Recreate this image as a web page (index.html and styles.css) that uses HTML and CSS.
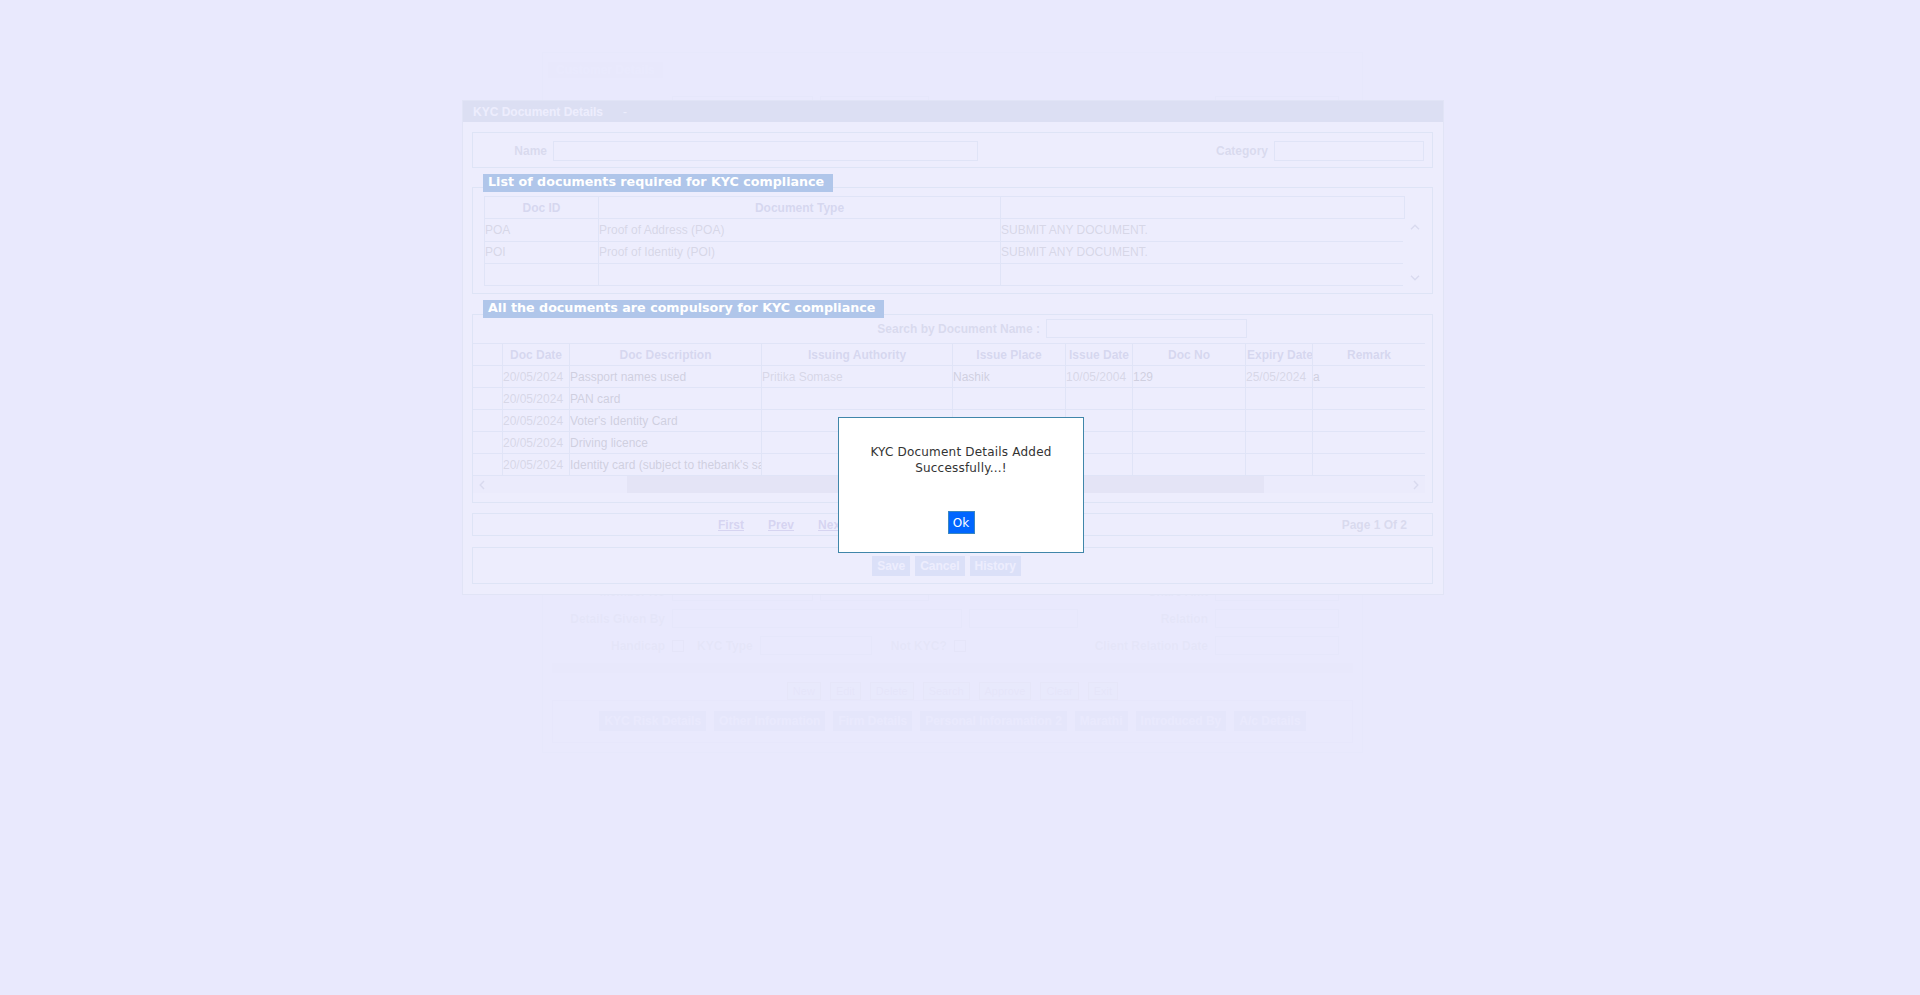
FILE: index.html
```html
<!DOCTYPE html>
<html lang="en">
<head>
<meta charset="utf-8">
<title>KYC Document Details</title>
<link rel="stylesheet" href="styles.css">
</head>
<body>
<div class="page">
  <div class="page-tabs"><span class="page-tab">Customer Details</span></div>
  <div class="fields">
    <div class="frow"><span class="fl">Customer No</span><span class="fi w141"></span><span class="fi w109"></span><span class="fl grow">Branch</span><span class="fi w124"></span></div>
    <div class="frow"><span class="fl">Title</span><span class="fi w141"></span><span class="fi w109"></span><span class="fl grow">Gender</span><span class="fi w124"></span></div>
    <div class="frow"><span class="fl">First Name</span><span class="fi w141"></span><span class="fi w109"></span><span class="fl grow">Middle Name</span><span class="fi w124"></span></div>
    <div class="frow"><span class="fl">Last Name</span><span class="fi w141"></span><span class="fi w109"></span><span class="fl grow">Birth Date</span><span class="fi w124"></span></div>
    <div class="frow"><span class="fl">Address 1</span><span class="fi w290"></span><span class="fl grow">City</span><span class="fi w124"></span></div>
    <div class="frow"><span class="fl">Address 2</span><span class="fi w290"></span><span class="fl grow">State</span><span class="fi w124"></span></div>
    <div class="frow"><span class="fl">Address 3</span><span class="fi w290"></span><span class="fl grow">Pin Code</span><span class="fi w124"></span></div>
    <div class="frow"><span class="fl">Phone</span><span class="fi w141"></span><span class="fi w109"></span><span class="fl grow">Mobile No</span><span class="fi w124"></span></div>
    <div class="frow"><span class="fl">Email</span><span class="fi w290"></span><span class="fl grow">PAN No</span><span class="fi w124"></span></div>
    <div class="frow"><span class="fl">Occupation</span><span class="fi w141"></span><span class="fi w109"></span><span class="fl grow">Income</span><span class="fi w124"></span></div>
    <div class="frow"><span class="fl">Category</span><span class="fi w141"></span><span class="fi w109"></span><span class="fl grow">Caste</span><span class="fi w124"></span></div>
    <div class="frow"><span class="fl">Religion</span><span class="fi w141"></span><span class="fi w109"></span><span class="fl grow">Education</span><span class="fi w124"></span></div>
    <div class="frow"><span class="fl">Nominee</span><span class="fi w290"></span><span class="fl grow">Relation</span><span class="fi w124"></span></div>
    <div class="frow"><span class="fl">Guardian</span><span class="fi w290"></span><span class="fl grow">Relation</span><span class="fi w124"></span></div>
    <div class="frow"><span class="fl">Father Name</span><span class="fi w290"></span><span class="fl grow">Mother Name</span><span class="fi w124"></span></div>
    <div class="frow"><span class="fl">Spouse Name</span><span class="fi w290"></span><span class="fl grow">Marital Status</span><span class="fi w124"></span></div>
    <div class="frow"><span class="fl">Aadhar No</span><span class="fi w141"></span><span class="fi w109"></span><span class="fl grow">Voter ID</span><span class="fi w124"></span></div>
    <div class="frow"><span class="fl">Passport No</span><span class="fi w141"></span><span class="fi w109"></span><span class="fl grow">Valid Till</span><span class="fi w124"></span></div>
    <div class="frow"><span class="fl">Member No</span><span class="fi w141"></span><span class="fi w109"></span><span class="fl grow">Share Amt</span><span class="fi w124"></span></div>
    <div class="frow"><span class="fl">Details Given By</span><span class="fi w290"></span><span class="fi w109"></span><span class="fl grow">Relation</span><span class="fi w124"></span></div>
    <div class="frow"><span class="fl">Handicap</span><span class="chk"></span><span class="fl auto">KYC Type</span><span class="fi w112"></span><span class="fl auto pad">Not KYC?</span><span class="chk"></span><span class="fl grow">Client Relation Date</span><span class="fi w124"></span></div>
  </div>
  <div class="band"></div>
  <div class="actions">
    <button class="act" type="button">New</button>
    <button class="act" type="button">Edit</button>
    <button class="act" type="button">Delete</button>
    <button class="act" type="button">Search</button>
    <button class="act" type="button">Approve</button>
    <button class="act" type="button">Clear</button>
    <button class="act" type="button">Exit</button>
  </div>
  <div class="tabs">
    <button class="tab" type="button">KYC Risk Details</button>
    <button class="tab" type="button">Other Information</button>
    <button class="tab" type="button">Firm Details</button>
    <button class="tab" type="button">Personal Inforamation 2</button>
    <button class="tab" type="button">Marathi</button>
    <button class="tab" type="button">Introduced By</button>
    <button class="tab" type="button">A/c Details</button>
  </div>
</div>

<div class="shade shade-page"></div>

<div class="dialog">
  <div class="dlg-title"><span>KYC Document Details</span><span class="dlg-min">-</span></div>
  <div class="dlg-body">
    <div class="box namebox">
      <label class="lbl name-lbl">Name</label><input class="inp name-inp" type="text">
      <label class="lbl cat-lbl">Category</label><input class="inp cat-inp" type="text">
    </div>

    <div class="legend">List of documents required for KYC compliance</div>
    <div class="box group doclist">
      <table class="grid g1">
        <colgroup><col class="c-id"><col class="c-type"><col></colgroup>
        <tr><th>Doc ID</th><th>Document Type</th><th></th></tr>
      </table>
      <div class="g1-row">
        <div class="g1-body">
          <table class="grid g1">
            <colgroup><col class="c-id"><col class="c-type"><col></colgroup>
            <tr><td class="dim">POA</td><td class="dim">Proof of Address (POA)</td><td class="dim">SUBMIT ANY DOCUMENT.</td></tr>
            <tr><td class="dim">POI</td><td class="dim">Proof of Identity (POI)</td><td class="dim">SUBMIT ANY DOCUMENT.</td></tr>
            <tr><td></td><td></td><td></td></tr>
          </table>
        </div>
        <div class="vscroll">
          <svg class="arr" width="10" height="6" viewBox="0 0 10 6"><path d="M1 5.2 L5 1.2 L9 5.2" fill="none" stroke="currentColor" stroke-width="1.4"/></svg>
          <svg class="arr" width="10" height="6" viewBox="0 0 10 6"><path d="M1 0.8 L5 4.8 L9 0.8" fill="none" stroke="currentColor" stroke-width="1.4"/></svg>
        </div>
      </div>
    </div>

    <div class="legend">All the documents are compulsory for KYC compliance</div>
    <div class="box group2 docs">
      <div class="search"><label class="lbl">Search by Document Name :</label><input class="inp search-inp" type="text"></div>
      <div class="g2-wrap">
        <table class="grid g2">
          <colgroup><col class="k0"><col class="k1"><col class="k2"><col class="k3"><col class="k4"><col class="k5"><col class="k6"><col class="k7"><col class="k8"></colgroup>
          <tr><th></th><th>Doc Date</th><th>Doc Description</th><th>Issuing Authority</th><th>Issue Place</th><th>Issue Date</th><th>Doc No</th><th>Expiry Date</th><th>Remark</th></tr>
          <tr><td></td><td class="dim">20/05/2024</td><td>Passport names used</td><td class="dim">Pritika Somase</td><td>Nashik</td><td class="dim">10/05/2004</td><td>129</td><td class="dim">25/05/2024</td><td>a</td></tr>
          <tr><td></td><td class="dim">20/05/2024</td><td>PAN card</td><td></td><td></td><td></td><td></td><td></td><td></td></tr>
          <tr><td></td><td class="dim">20/05/2024</td><td>Voter's Identity Card</td><td></td><td></td><td></td><td></td><td></td><td></td></tr>
          <tr><td></td><td class="dim">20/05/2024</td><td>Driving licence</td><td></td><td></td><td></td><td></td><td></td><td></td></tr>
          <tr><td></td><td class="dim">20/05/2024</td><td>Identity card (subject to thebank's satisfaction)</td><td></td><td></td><td></td><td></td><td></td><td></td></tr>
        </table>
        <div class="hscroll">
          <svg class="arr" width="6" height="10" viewBox="0 0 6 10"><path d="M5 1 L1.2 5 L5 9" fill="none" stroke="currentColor" stroke-width="1.4"/></svg>
          <div class="h-track"><div class="h-thumb"></div></div>
          <svg class="arr" width="6" height="10" viewBox="0 0 6 10"><path d="M1 1 L4.8 5 L1 9" fill="none" stroke="currentColor" stroke-width="1.4"/></svg>
        </div>
      </div>
    </div>

    <div class="box pager">
      <div class="links"><a href="#">First</a><a href="#">Prev</a><a href="#">Next</a><a href="#">Last</a></div>
      <span class="pageno">Page 1 Of 2</span>
    </div>

    <div class="box btnbox">
      <button class="btn" type="button">Save</button>
      <button class="btn" type="button">Cancel</button>
      <button class="btn" type="button">History</button>
    </div>
  </div>
</div>

<div class="shade"></div>

<div class="msgbox">
  <p class="msg">KYC Document Details Added<br>Successfully...!</p>
  <button class="ok" type="button">Ok</button>
</div>
</body>
</html>
```

FILE: styles.css
```css
html, body {
  margin: 0;
  padding: 0;
  background: #ffffff;
  font-family: "Liberation Sans", Arial, sans-serif;
  font-size: 12px;
}

/* ---------- background page ---------- */
.page {
  width: 801px;
  margin: 52px 0 0 542px;
  border: 1px solid #a8b2c6;
  padding: 9px;
  color: #222;
}
.page-tabs { height: 22px; display: flex; align-items: flex-start; }
.page-tab {
  margin-left: -4px;
  padding: 1px 8px;
  background: #b9c6de;
  color: #fff;
  font-weight: bold;
}
.fields {
  padding: 12px 0 8px;
}
.frow {
  display: flex;
  align-items: center;
  gap: 7px;
  height: 19px;
  margin-bottom: 8px;
}
.frow:last-child { margin-bottom: 0; }
.fl {
  width: 113px;
  text-align: right;
  font-weight: bold;
  color: #1a1a1a;
  white-space: nowrap;
}
.fl.grow { flex: 1; width: auto; }
.fl.auto { width: auto; margin-left: 6px; }
.fl.auto.pad { margin-left: 12px; }
.fi {
  height: 19px;
  box-sizing: border-box;
  border: 1px solid #6f8fb8;
  background: #ffffff;
}
.w141 { width: 141px; }
.w109 { width: 109px; }
.w290 { width: 290px; }
.w112 { width: 112px; }
.w124 { width: 124px; margin-right: 14px; }
.chk {
  width: 10px;
  height: 10px;
  border: 1px solid #333;
  background: #fff;
}
.band {
  height: 10px;
  background: #b4bfd8;
}
.actions {
  display: flex;
  justify-content: center;
  gap: 9px;
  margin-top: 9px;
  height: 18px;
}
.act {
  height: 18px;
  padding: 0 5px;
  border: 1px solid #555;
  background: #d7dbe6;
  color: #222;
  font: 11px "Liberation Sans", Arial, sans-serif;
}
.tabs {
  display: flex;
  justify-content: center;
  gap: 8px;
  padding: 10px 0 11px;
  border: 1px solid #9aa6c0;
}
.tab {
  height: 20px;
  padding: 0 5px;
  border: 0;
  background: #2f5597;
  color: #ffffff;
  font: bold 12px "Liberation Sans", Arial, sans-serif;
}

/* ---------- modal shades ---------- */
.shade {
  position: fixed;
  inset: 0;
  background: rgba(232, 233, 253, 0.8);
}
.shade-page {
  background: rgba(232, 233, 253, 0.9);
}

/* ---------- dialog ---------- */
.dialog {
  position: absolute;
  left: 462px;
  top: 100px;
  width: 980px;
  border: 1px solid #c2d2da;
  background: #ffffff;
}
.dlg-title {
  height: 21px;
  display: flex;
  align-items: center;
  padding-left: 10px;
  background: #a9b9cb;
  color: #ffffff;
  font-weight: bold;
}
.dlg-min { margin-left: 20px; font-weight: normal; }
.dlg-body {
  padding: 10px 10px 10px 9px;
}
.box {
  border: 1px solid #b6cfdc;
  box-sizing: border-box;
}
.namebox {
  height: 36px;
  display: flex;
  align-items: center;
  padding-right: 8px;
  padding-top: 1px;
}
.lbl {
  font-weight: bold;
  color: #9aa0b2;
  white-space: nowrap;
}
.name-lbl { width: 74px; text-align: right; }
.cat-lbl { margin-left: auto; }
.inp {
  height: 20px;
  box-sizing: border-box;
  border: 1px solid #bdd2df;
  background: #ffffff;
  margin: 0 0 0 6px;
  padding: 0;
}
.name-inp { width: 425px; }
.cat-inp { width: 150px; }

.legend {
  position: relative;
  z-index: 1;
  display: inline-block;
  margin: 6px 0 0 11px;
  height: 18px;
  line-height: 18px;
  padding: 0 9px 0 5px;
  background: #b0c6ea;
  color: #ffffff;
  font: bold 12.7px "DejaVu Sans", Verdana, sans-serif;
}
.group {
  margin-top: -5px;
  padding: 8px 9px 6px 11px;
}
.group2 {
  margin-top: -4px;
  padding: 4px 9px 9px 0;
}

.grid {
  border-collapse: collapse;
  table-layout: fixed;
}
.grid th, .grid td {
  height: 22px;
  box-sizing: border-box;
  border: 1px solid #bdd2df;
  padding: 0;
  white-space: nowrap;
  overflow: hidden;
  text-align: left;
  font-weight: normal;
}
.grid th {
  padding: 0 1px;
  text-align: center;
  font-weight: bold;
  color: #8b91b7;
}
.grid td { color: #6a6a6a; }
.grid td.dim { color: #909090; }

.g1 { width: 921px; }
.c-id { width: 114px; }
.c-type { width: 402px; }
.g1-row { display: flex; }
.g1-body {
  width: 921px;
  height: 68px;
  overflow: hidden;
}
.g1-body .grid tr:first-child td { border-top: 0; }
.vscroll {
  width: 17px;
  margin-left: 3px;
  height: 68px;
  display: flex;
  flex-direction: column;
  justify-content: space-between;
  align-items: center;
  padding: 5px 0 6px;
  box-sizing: border-box;
  color: #9aa0b8;
}

.search {
  display: flex;
  justify-content: flex-end;
  align-items: center;
  height: 19px;
  padding-right: 176px;
}
.search-inp { width: 201px; height: 19px; }

.g2-wrap {
  margin-top: 5px;
  width: 952px;
  overflow: hidden;
}
.g2 { width: 953px; margin-left: -1px; }
.g2 tr:first-child th { border-top: 1px solid #bdd2df; }
.k0 { width: 30px; }
.k1 { width: 67px; }
.k2 { width: 192px; }
.k3 { width: 191px; }
.k4 { width: 113px; }
.k5 { width: 67px; }
.k6 { width: 113px; }
.k7 { width: 67px; }
.k8 { width: 113px; }

.hscroll {
  height: 17px;
  display: flex;
  align-items: center;
  background: #f3f3f7;
  color: #9aa0b8;
}
.hscroll .arr { margin: 0 6px 0 6px; }
.h-track {
  flex: 1;
  height: 17px;
  display: flex;
  align-items: stretch;
}
.h-thumb {
  margin-left: 136px;
  width: 637px;
  background: #cfd0dc;
}

.pager {
  margin-top: 10px;
  height: 23px;
  display: flex;
  align-items: center;
  padding-right: 25px;
}
.links {
  display: flex;
  gap: 24px;
  margin-left: 245px;
}
.links a {
  color: #8a80c0;
  font-weight: bold;
  text-decoration: underline;
}
.pageno {
  margin-left: auto;
  font-weight: bold;
  color: #9aa0b2;
}

.btnbox {
  margin-top: 11px;
  height: 37px;
  display: flex;
  justify-content: center;
  align-items: center;
  gap: 5px;
  padding-right: 12px;
}
.btn {
  height: 20px;
  padding: 0 5px;
  border: 0;
  background: #a6bee6;
  color: #ffffff;
  font: bold 12px "Liberation Sans", Arial, sans-serif;
}

/* ---------- message box ---------- */
.msgbox {
  position: absolute;
  left: 838px;
  top: 417px;
  width: 244px;
  height: 134px;
  border: 1px solid #4086aa;
  background: #ffffff;
  text-align: center;
  font-family: "DejaVu Sans", Verdana, sans-serif;
}
.msg {
  margin: 26px 0 0;
  font-size: 12px;
  line-height: 16px;
  letter-spacing: 0.2px;
  color: #333333;
}
.ok {
  margin-top: 35px;
  height: 23px;
  width: 27px;
  padding: 0;
  border: 1px solid #3a87c0;
  background: #0066ff;
  color: #ffffff;
  font: 12px "DejaVu Sans", Verdana, sans-serif;
}
```
